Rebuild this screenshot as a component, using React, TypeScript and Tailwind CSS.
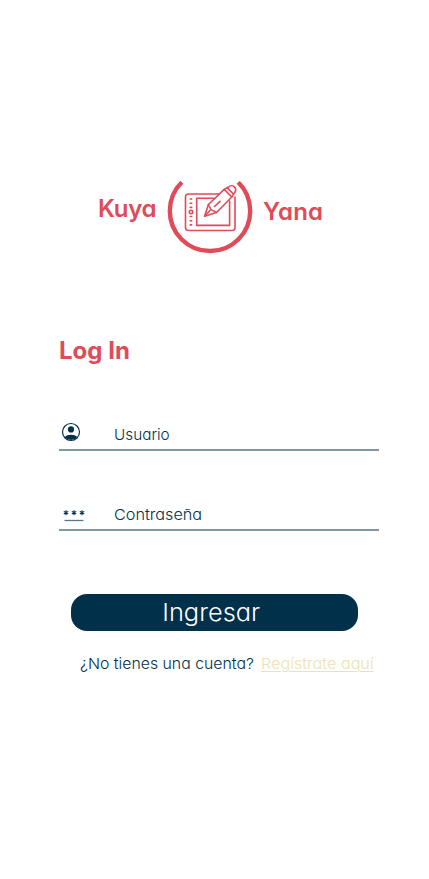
import type { ReactNode } from 'react';

function Logo() {
  return (
    <svg width="88" height="78" viewBox="166 178 88 78" fill="none" stroke="#e04a59" className="block shrink-0">
      <path d="M181.8 182.2A40.200 40.200 0 1 0 238.2 182.200" strokeWidth="4.4" />
      <g strokeWidth="1.6" strokeLinecap="round" strokeLinejoin="round">
        <path d="M219 194H188.5a3 3 0 0 0-3 3V227.500a3 3 0 0 0 3 3H232a3 3 0 0 0 3-3V197" />
        <path d="M213.500 198.300H196.700V225.400H229.600V201" />
        <path d="M204.600 216.200 208.400 204.500 224.200 189.400 231.800 197 216.500 212.500Z" />
        <path d="M208.400 204.500 211 209.600 216.500 212.500M204.600 216.200 210 210.500M214.500 206.500 220 201.300" />
        <path d="M224.200 189.400 228.600 187a3.800 3.800 0 0 1 6 5.600L231.800 197M227 187.600 233.400 194" />
        <path d="M190.200 199h1.500M190.200 203.200h1.500M190.200 207.400h1.500M190.200 216.500h1.500M190.200 220.700h1.500M190.200 224.900h1.500" />
        <circle cx="191" cy="212" r="1.700" />
      </g>
    </svg>
  );
}

function UserIcon() {
  return (
    <svg width="20" height="20" viewBox="0 0 20 20" className="block">
      <circle cx="10" cy="10" r="8.500" fill="none" stroke="#00304a" strokeWidth="1.200" />
      <circle cx="10" cy="7.400" r="3.100" fill="#00304a" />
      <path d="M3.800 15.200C6 12 14 12 16.200 15.200A8.500 8.500 0 0 1 3.800 15.200Z" fill="#00304a" />
    </svg>
  );
}

function PasswordIcon() {
  return (
    <svg width="26" height="14" viewBox="0 0 26 14" className="block" stroke="#00304a">
      <path strokeWidth="1.100" d="M5 1.200v5M2.800 2.400l4.400 2.600M7.200 2.400l-4.400 2.600M13 1.200v5M10.800 2.400l4.400 2.600M15.200 2.400l-4.400 2.600M21 1.200v5M18.800 2.400l4.400 2.600M23.200 2.400l-4.400 2.600" />
      <path d="M3.500 11.500h19" strokeWidth="1.300" opacity=".65" />
    </svg>
  );
}

function Field({ label, icon }: { label: ReactNode; icon: ReactNode }) {
  return (
    <label className="flex h-[34px] w-80 border-b-2 border-[#7f97a4] text-[15px] leading-[36px]">
      <span className="w-[55px] shrink-0 pl-0.5 pt-[5px]">{icon}</span>
      {label}
    </label>
  );
}

export default function App() {
  return (
    <main className="flex h-[879px] w-[429px] flex-col bg-white pt-[178px] font-['Inter','Open_Sans',sans-serif] font-light text-[#00304a] [font-feature-settings:'cv11']">
      <header className="flex h-[78px] items-start pl-[98px] text-[24px] font-semibold leading-[30px] text-[#e04a59]">
        <span className="w-[68px] pt-[16px] tracking-[-0.3px]">Kuya</span>
        <Logo />
        <span className="pl-[9px] pt-[19px] tracking-[0.2px]">Yana</span>
      </header>
      <h1 className="mt-[79px] pl-[59px] text-[24px] font-bold leading-[32px] text-[#e04a59]">Log In</h1>
      <div className="mt-[50px] flex flex-col gap-[46px] pl-[59px]">
        <Field icon={<UserIcon />} label={<span className="origin-left scale-x-[1.02]">Usuario</span>} />
        <Field icon={<span className="block pt-[7px]"><PasswordIcon /></span>} label={<span className="origin-left scale-x-[1.08]">Contraseña</span>} />
      </div>
      <button className="ml-[71px] mt-[63px] h-[37px] w-[287px] shrink-0 rounded-2xl bg-[#00304a] pr-[6px] text-[24px] leading-[35px] text-white">
        <span className="inline-block scale-x-[1.06]">Ingresar</span>
      </button>
      <p className="mt-[22px] flex whitespace-nowrap pl-[80px] text-[15px] leading-[22px]">
        <span className="w-[181px]"><span className="inline-block origin-left scale-x-[1.056]">¿No tienes una cuenta?</span></span>
        <a href="#" className="origin-left scale-x-[1.077] text-[#eee2b2] underline decoration-1 underline-offset-2">Regístrate aquí</a>
      </p>
    </main>
  );
}
